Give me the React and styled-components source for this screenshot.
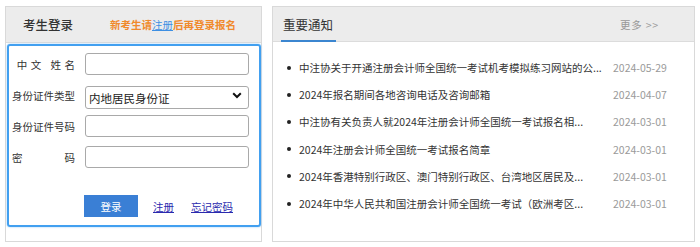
import styled, { createGlobalStyle } from "styled-components";

const GlobalStyle = createGlobalStyle`
  body {
    margin: 0;
    background: #ffffff;
    font-family: "Noto Sans CJK SC", "Noto Sans", sans-serif;
    color: #333333;
  }
`;

const notices = [
  { title: "中注协关于开通注册会计师全国统一考试机考模拟练习网站的公...", date: "2024-05-29" },
  { title: "2024年报名期间各地咨询电话及咨询邮箱", date: "2024-04-07" },
  { title: "中注协有关负责人就2024年注册会计师全国统一考试报名相...", date: "2024-03-01" },
  { title: "2024年注册会计师全国统一考试报名简章", date: "2024-03-01" },
  { title: "2024年香港特别行政区、澳门特别行政区、台湾地区居民及...", date: "2024-03-01" },
  { title: "2024年中华人民共和国注册会计师全国统一考试（欧洲考区...", date: "2024-03-01" },
];

export default function App() {
  return (
    <>
      <GlobalStyle />
      <Page>
        <LoginPanel>
          <LoginHeader>
            <HeaderTitle>考生登录</HeaderTitle>
            <Hint>
              新考生请<HintLink>注册</HintLink>后再登录报名
            </Hint>
          </LoginHeader>
          <FormBox>
            <Field>
              <Label>
                <Spaced>中文 姓名</Spaced>
              </Label>
              <Input type="text" />
            </Field>
            <Field>
              <Label>身份证件类型</Label>
              <SelectWrap>
                <Select defaultValue="1">
                  <option value="1">内地居民身份证</option>
                </Select>
                <Chevron width="10" height="7" viewBox="0 0 10 7">
                  <path d="M1.2 1.3 L5 5 L8.8 1.3" fill="none" stroke="#111" strokeWidth="2" />
                </Chevron>
              </SelectWrap>
            </Field>
            <Field>
              <Label>身份证件号码</Label>
              <Input type="text" />
            </Field>
            <Field>
              <Label $justify>密 码</Label>
              <Input type="password" />
            </Field>
            <Actions>
              <LoginButton>登录</LoginButton>
              <TextLink>注册</TextLink>
              <TextLink>忘记密码</TextLink>
            </Actions>
          </FormBox>
        </LoginPanel>

        <NoticePanel>
          <NoticeHeader>
            <Tab>重要通知</Tab>
            <More>更多 &gt;&gt;</More>
          </NoticeHeader>
          <NoticeList>
            {notices.map((n, i) => (
              <NoticeItem key={i}>
                <NoticeTitle>{n.title}</NoticeTitle>
                <NoticeDate>{n.date}</NoticeDate>
              </NoticeItem>
            ))}
          </NoticeList>
        </NoticePanel>
      </Page>
    </>
  );
}

const Page = styled.div`
  display: flex;
  gap: 10px;
  padding: 6px 5px;
  width: 700px;
  box-sizing: border-box;
`;

const Panel = styled.div`
  border: 1px solid #d9d9d9;
  height: 236px;
  box-sizing: border-box;
  display: flex;
  flex-direction: column;
  background: #ffffff;
`;

const LoginPanel = styled(Panel)`
  width: 257px;
`;

const NoticePanel = styled(Panel)`
  width: 423px;
`;

const LoginHeader = styled.div`
  height: 35px;
  background: #ececec;
  border-bottom: 1px solid #dcdcdc;
  display: flex;
  align-items: center;
  justify-content: space-between;
  padding: 0 25px 0 17px;
`;

const HeaderTitle = styled.div`
  font-size: 12.5px;
  color: #333333;
  font-weight: 500;
`;

const Hint = styled.div`
  font-size: 10.5px;
  font-weight: 700;
  color: #f08a2c;
`;

const HintLink = styled.span`
  color: #3d8fe3;
  text-decoration: underline;
  font-weight: 400;
`;

const FormBox = styled.div`
  margin: 1px 0 0 1px;
  border: 2px solid #42a0f0;
  border-radius: 3px;
  box-shadow: 0 0 2px #8cc6f7;
  height: 183px;
  box-sizing: border-box;
  padding: 7px 10px 0 3px;
  display: flex;
  flex-direction: column;
  gap: 9px;
`;

const Field = styled.div`
  display: flex;
  align-items: center;
  gap: 10px;
  height: 22px;
`;

const Label = styled.div`
  width: 63px;
  flex: none;
  font-size: 10.5px;
  color: #333333;
  white-space: nowrap;
  text-align: ${(p) => (p.$justify ? "justify" : "right")};
  text-align-last: ${(p) => (p.$justify ? "justify" : "auto")};
`;

const Spaced = styled.span`
  letter-spacing: 3.5px;
  margin-right: -3.5px;
`;

const Input = styled.input`
  width: 164px;
  height: 22px;
  flex: none;
  box-sizing: border-box;
  border: 1px solid #a9a9a9;
  border-radius: 3px;
  padding: 0 4px;
  font-size: 10.5px;
  outline: none;
`;

const SelectWrap = styled.div`
  position: relative;
  flex: none;
  width: 164px;
  height: 23px;
`;

const Select = styled.select`
  appearance: none;
  width: 100%;
  height: 100%;
  box-sizing: border-box;
  border: 1px solid #a9a9a9;
  border-radius: 3px;
  padding: 0 3px;
  background: #ffffff;
  font-family: "Noto Sans CJK SC", "Noto Sans", sans-serif;
  font-size: 11.5px;
  color: #222222;
  outline: none;
`;

const Chevron = styled.svg`
  position: absolute;
  right: 7px;
  top: 8px;
  pointer-events: none;
`;

const Actions = styled.div`
  display: flex;
  align-items: center;
  padding-left: 72px;
  margin-top: 18px;
  font-size: 10.5px;
  white-space: nowrap;
`;

const LoginButton = styled.button`
  flex: none;
  width: 54px;
  height: 22px;
  border: none;
  background: #3a7fd5;
  color: #ffffff;
  font-family: "Noto Sans CJK SC", "Noto Sans", sans-serif;
  font-size: 10.5px;
  margin-right: 15px;
  padding: 0;
`;

const TextLink = styled.a`
  flex: none;
  color: #2a2aae;
  text-decoration: underline;
  margin-right: 17px;
  cursor: pointer;
`;

const NoticeHeader = styled.div`
  height: 34px;
  background: #ececec;
  border-bottom: 1px solid #dcdcdc;
  display: flex;
  align-items: stretch;
  justify-content: space-between;
  padding: 0 35px 0 8px;
`;

const Tab = styled.div`
  display: flex;
  align-items: center;
  padding: 2px 3px 0 2px;
  font-size: 12.5px;
  color: #333333;
  border-bottom: 2px solid #3b86d0;
  margin-bottom: -1px;
`;

const More = styled.div`
  display: flex;
  align-items: center;
  font-size: 10.5px;
  color: #999999;
  letter-spacing: 0.8px;
`;

const NoticeList = styled.ul`
  list-style: none;
  margin: 0;
  padding: 12px 24px 0 14px;
`;

const NoticeItem = styled.li`
  display: flex;
  align-items: center;
  height: 27.2px;
  font-size: 10.5px;

  &::before {
    content: "";
    flex: none;
    width: 4px;
    height: 4px;
    border-radius: 50%;
    background: #222222;
    margin-right: 8px;
  }
`;

const NoticeTitle = styled.span`
  flex: 1;
  min-width: 0;
  white-space: nowrap;
  overflow: hidden;
  color: #333333;
`;

const NoticeDate = styled.span`
  flex: none;
  width: 57px;
  margin-left: 8px;
  color: #9a9a9a;
  white-space: nowrap;
`;
